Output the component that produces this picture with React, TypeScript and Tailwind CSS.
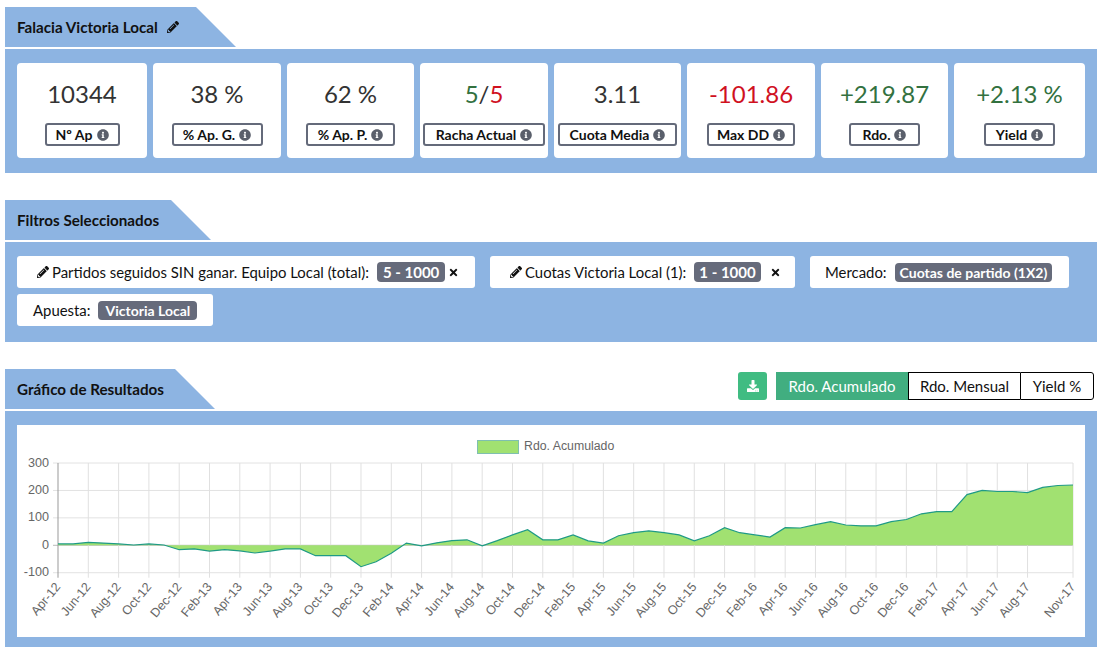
import React from 'react';
import { FaPencilAlt, FaInfoCircle, FaTimes, FaDownload } from 'react-icons/fa';

const stats = [
  { label: 'Nº Ap', value: <span>10344</span>, w: 'w-[75px]' },
  { label: '% Ap. G.', value: <span>38 %</span>, w: 'w-[91px]' },
  { label: '% Ap. P.', value: <span>62 %</span>, w: 'w-[89px]' },
  {
    label: 'Racha Actual',
    value: (
      <span>
        <span className="text-[#33713f]">5</span>/<span className="text-[#d0111f]">5</span>
      </span>
    ),
    w: 'w-[122px]',
  },
  { label: 'Cuota Media', value: <span>3.11</span>, w: 'w-[119px]' },
  { label: 'Max DD', value: <span className="text-[#d0111f]">-101.86</span>, w: 'w-[88px]' },
  { label: 'Rdo.', value: <span className="text-[#33713f]">+219.87</span>, w: 'w-[71px]' },
  { label: 'Yield', value: <span className="text-[#33713f]">+2.13 %</span>, w: 'w-[71px]' },
];

const months = ['Apr-12','Jun-12','Aug-12','Oct-12','Dec-12','Feb-13','Apr-13','Jun-13','Aug-13','Oct-13','Dec-13','Feb-14','Apr-14','Jun-14','Aug-14','Oct-14','Dec-14','Feb-15','Apr-15','Jun-15','Aug-15','Oct-15','Dec-15','Feb-16','Apr-16','Jun-16','Aug-16','Oct-16','Dec-16','Feb-17','Apr-17','Jun-17','Aug-17'];

const series = [5,5,11,8,5,1,5,1,-16,-13,-21,-16,-20,-28,-21,-13,-13,-38,-38,-38,-78,-60,-29,8,-2,9,17,20,-2,17,38,57,20,20,38,16,8,35,46,53,46,38,16,35,64,46,38,30,64,63,75,86,74,71,71,86,94,115,123,123,185,200,196,196,192,211,218,220];

// chart coords are relative to the white box (17, 425)
const left = 41;
const right = 1056;
const step = (right - left) / 67;
const xAt = (i: number) => left + step * i;
const yAt = (v: number) => 120.3 - v * 0.2743;

function Chart() {
  const line = series.map((v, i) => `${xAt(i).toFixed(1)},${yAt(v).toFixed(1)}`).join(' ');
  const area = `${left},${yAt(0)} ${line} ${right},${yAt(0)}`;
  const ticks = months.map((m, i) => ({ m, i: i * 2 })).concat({ m: 'Nov-17', i: 67 });
  return (
    <svg width="1068" height="212" className="block">
      <rect x="460.5" y="15.5" width="41" height="13" fill="#a1e171" stroke="#7fbfb0" />
      <text x="507" y="25" fontSize="12.3" fill="#666" fontFamily="'Liberation Sans', sans-serif">Rdo. Acumulado</text>
      {[300, 200, 100, 0, -100].map((v) => (
        <g key={v}>
          <line x1={left - 5} x2={right} y1={yAt(v)} y2={yAt(v)} stroke={v === 0 ? '#bbb' : '#e2e2e2'} />
          <text x={left - 9} y={yAt(v) + 3.5} textAnchor="end" fontSize="12.6" fill="#666" fontFamily="'Liberation Sans', sans-serif">{v}</text>
        </g>
      ))}
      {ticks.map(({ m, i }) => (
        <g key={m}>
          <line x1={xAt(i)} x2={xAt(i)} y1={yAt(300)} y2={yAt(-100) + 5} stroke={i === 0 ? '#999' : '#e0e0e0'} />
          <text
            x={xAt(i) + 3}
            y={yAt(-100) + 14.5}
            textAnchor="end"
            fontSize="12.6"
            fill="#666"
            fontFamily="'Liberation Sans', sans-serif"
            transform={`rotate(-50 ${xAt(i) + 3} ${yAt(-100) + 14.5})`}
          >
            {m}
          </text>
        </g>
      ))}
      <polygon points={area} fill="#a1e171" />
      <polyline points={line} fill="none" stroke="#1f9a86" strokeWidth="1.2" />
    </svg>
  );
}

function Filter({ className, children }: { className: string; children: React.ReactNode }) {
  return (
    <div className={`flex h-8 items-center whitespace-nowrap rounded-[3px] bg-white text-[14.9px] text-[#111] ${className}`}>
      <span className="flex items-center">{children}</span>
    </div>
  );
}

function Badge({ className, children }: { className: string; children: React.ReactNode }) {
  return (
    <span className={`rounded-[4px] bg-[#666b7b] py-[1px] font-bold text-white ${className}`}>
      {children}
    </span>
  );
}

export default function App() {
  return (
    <div className="min-h-[654px] w-[1101px] bg-white pl-[5px] pr-[4px] pt-[7px] [font-family:Lato,sans-serif] text-[#111]">
      <div className="flex h-10 w-[231px] items-center bg-[#8db4e2] pl-3 text-[15.2px] font-bold [clip-path:polygon(0_0,191px_0,100%_100%,0_100%)]">
        Falacia Victoria Local
        <FaPencilAlt className="ml-[9px] shrink-0 text-[12px]" />
      </div>
      <div className="mt-[2px] bg-[#8db4e2] px-3 pb-[15px] pt-[14px]">
        <div className="grid grid-cols-[130px_128px_127px_128px_127px_128px_127px_131px] gap-x-[6px]">
          {stats.map((s) => (
            <div key={s.label} className="flex h-[95px] flex-col items-center rounded-[4px] bg-white pt-[16px]">
              <div className="h-[30px] text-[24px] leading-[30px] text-[#333]">{s.value}</div>
              <div className={`mt-[14px] flex h-[23px] items-center justify-center gap-1 rounded-[3px] border-2 border-[#646a7a] text-[14px] font-bold ${s.w}`}>
                {s.label}
                <FaInfoCircle className="shrink-0 text-[12px] text-[#5a5f6b]" />
              </div>
            </div>
          ))}
        </div>
      </div>

      <div className="mt-[27px] flex h-10 w-[206px] items-center bg-[#8db4e2] pl-3 text-[15.2px] font-bold [clip-path:polygon(0_0,166px_0,100%_100%,0_100%)]">
        Filtros Seleccionados
      </div>
      <div className="mt-[2px] h-[100px] bg-[#8db4e2] px-3 pt-[14px]">
        <div className="flex flex-wrap gap-x-[15px] gap-y-[6px]">
          <Filter className="w-[458px] pl-5">
            <FaPencilAlt className="mr-[3px] shrink-0 text-[12px]" />
            Partidos seguidos SIN ganar. Equipo Local (total):
            <span className="ml-2"><Badge className="px-[6px] text-[15px]">5 - 1000</Badge></span>
            <FaTimes className="ml-[3px] shrink-0 text-[11px]" />
          </Filter>
          <Filter className="w-[305px] pl-5">
            <FaPencilAlt className="mr-[3px] shrink-0 text-[12px]" />
            Cuotas Victoria Local (1):
            <span className="ml-2"><Badge className="px-[5px] text-[15px]">1 - 1000</Badge></span>
            <FaTimes className="ml-[9px] shrink-0 text-[11px]" />
          </Filter>
          <Filter className="w-[259px] pl-[15px]">
            Mercado:
            <span className="ml-2"><Badge className="px-[5px] text-[14px]">Cuotas de partido (1X2)</Badge></span>
          </Filter>
          <Filter className="w-[196px] pl-4">
            Apuesta:
            <span className="ml-2"><Badge className="px-[7px] text-[14px]">Victoria Local</Badge></span>
          </Filter>
        </div>
      </div>

      <div className="mt-[27px] flex h-10 items-start justify-between">
        <div className="flex h-10 w-[210px] items-center bg-[#8db4e2] pl-3 text-[15.2px] font-bold [clip-path:polygon(0_0,170px_0,100%_100%,0_100%)]">
          Gráfico de Resultados
        </div>
        <div className="mr-[3px] mt-[3px] flex items-center">
          <button type="button" className="flex h-[28px] w-[29px] items-center justify-center rounded-[3px] bg-[#40bc82] text-white">
            <FaDownload className="text-[12px]" />
          </button>
          <div className="ml-[9px] flex h-[28px] text-[15px]">
            <div className="flex w-[132px] items-center justify-center bg-[#41ae80] text-white">Rdo. Acumulado</div>
            <div className="flex w-[112px] items-center justify-center border-y border-l border-black">Rdo. Mensual</div>
            <div className="flex w-[74px] items-center justify-center rounded-r-[3px] border border-black">Yield %</div>
          </div>
        </div>
      </div>
      <div className="mt-[2px] h-[236px] bg-[#8db4e2] px-3 pt-[14px]">
        <div className="h-[212px] bg-white">
          <Chart />
        </div>
      </div>
    </div>
  );
}
